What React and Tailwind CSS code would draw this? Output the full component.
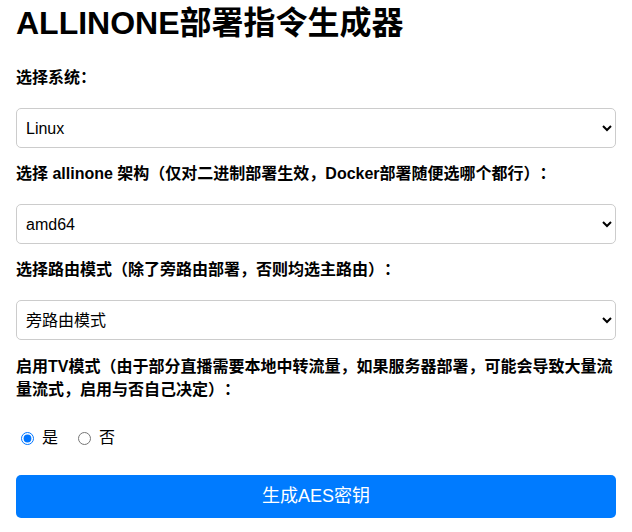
import { useState } from 'react';

const fontStack = "font-['Liberation_Sans','Noto_Sans_CJK_SC',sans-serif] [text-spacing-trim:space-all]";

function Field({ label, options, value, onChange }) {
  return (
    <div className="mb-[15px]">
      <label className="block text-[16px] font-bold leading-[21px] mb-[20px]">{label}</label>
      <select
        value={value}
        onChange={(e) => onChange(e.target.value)}
        className="block w-full h-[40px] pl-[5px] pr-2 text-[16px] border border-[#ccc] rounded-[5px] bg-white text-black"
      >
        {options.map((o) => (
          <option key={o} value={o}>{o}</option>
        ))}
      </select>
    </div>
  );
}

export default function App() {
  const [os, setOs] = useState('Linux');
  const [arch, setArch] = useState('amd64');
  const [mode, setMode] = useState('旁路由模式');
  const [tv, setTv] = useState('yes');

  return (
    <div className={`min-h-screen bg-white text-black ${fontStack}`}>
      <div className="w-[600px] mx-auto pt-[5px]">
        <h1 className="text-[32px] font-bold leading-[37px] mb-[25px]">ALLINONE部署指令生成器</h1>

        <Field label="选择系统：" options={['Linux', 'Windows', 'macOS', 'Docker']} value={os} onChange={setOs} />
        <Field
          label="选择 allinone 架构（仅对二进制部署生效，Docker部署随便选哪个都行）："
          options={['amd64', 'arm64', 'arm', '386']}
          value={arch}
          onChange={setArch}
        />
        <Field label="选择路由模式（除了旁路由部署，否则均选主路由）：" options={['旁路由模式', '主路由模式']} value={mode} onChange={setMode} />

        <label className="block text-[16px] font-bold leading-[23px]">
          启用TV模式（由于部分直播需要本地中转流量，如果服务器部署，可能会导致大量流量流式，启用与否自己决定）：
        </label>

        <div className="flex items-center h-[20px] mt-[27px] pl-[5px] text-[16px]">
          <label className="flex items-center gap-[8px] mr-[20px]">
            <input type="radio" name="tv" checked={tv === 'yes'} onChange={() => setTv('yes')} className="w-[13px] h-[13px] m-0" />
            <span>是</span>
          </label>
          <label className="flex items-center gap-[8px]">
            <input type="radio" name="tv" checked={tv === 'no'} onChange={() => setTv('no')} className="w-[13px] h-[13px] m-0" />
            <span>否</span>
          </label>
        </div>

        <button className="block w-full h-[43px] mt-[27px] rounded-[5px] bg-[#007bff] text-white text-[18px]">
          生成AES密钥
        </button>
      </div>
    </div>
  );
}
